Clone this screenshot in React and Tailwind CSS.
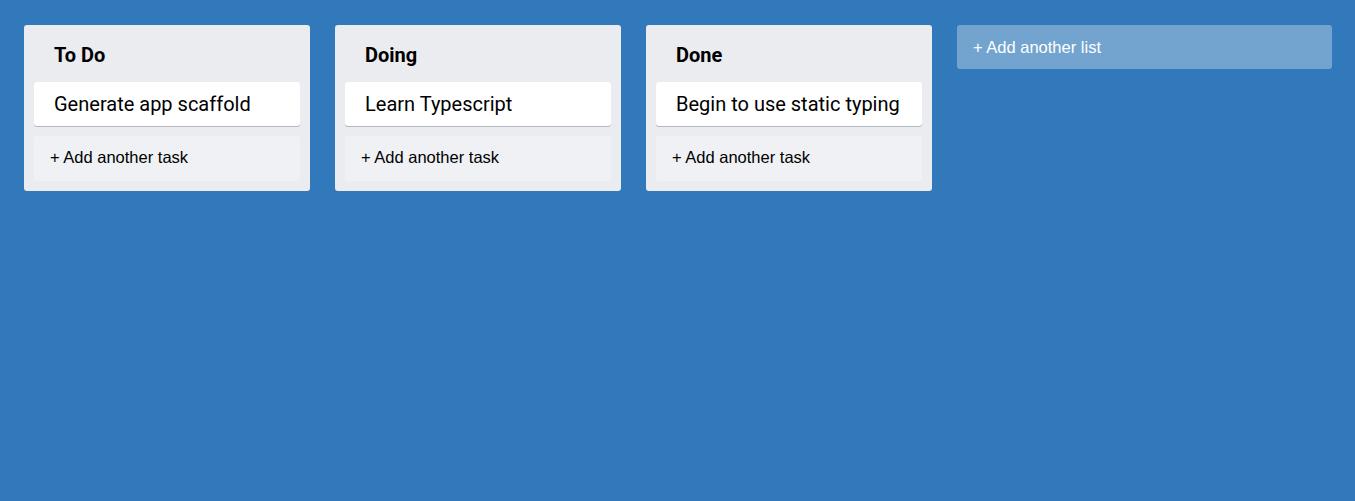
export default function App() {
  const cols = [
    { title: "To Do", task: "Generate app scaffold" },
    { title: "Doing", task: "Learn Typescript" },
    { title: "Done", task: "Begin to use static typing" },
  ];
  return (
    <div className="min-h-[501px] w-full bg-[#3179ba] pl-[24px] pt-[25px] flex flex-row items-start gap-[25px]">
      {cols.map((c) => (
        <div key={c.title} className="w-[286px] bg-[#ebecf0] rounded-[3px] px-[10px] pb-[10px]">
          <div className="h-[57px] flex items-center pl-[20px] pt-[2px] font-['Roboto',sans-serif] font-bold text-[20px] text-black">
            {c.title}
          </div>
          <div className="h-[44px] bg-white rounded-[3px] shadow-[0_1px_0_rgba(9,30,66,0.25)] flex items-center pl-[20px] font-['Roboto',sans-serif] text-[20px] text-black">
            {c.task}
          </div>
          <div className="mt-[10px] h-[45px] bg-[#f0f1f4] rounded-[3px] flex items-center pl-[16px] pb-[2px] font-['Liberation_Sans',Arial,sans-serif] text-[16.5px] text-black">
            + Add another task
          </div>
        </div>
      ))}
      <div className="w-[375px] h-[44px] rounded-[3px] bg-[#73a4cf] flex items-center pl-[16px] font-['Liberation_Sans',Arial,sans-serif] text-[16.5px] text-white">
        + Add another list
      </div>
    </div>
  );
}
